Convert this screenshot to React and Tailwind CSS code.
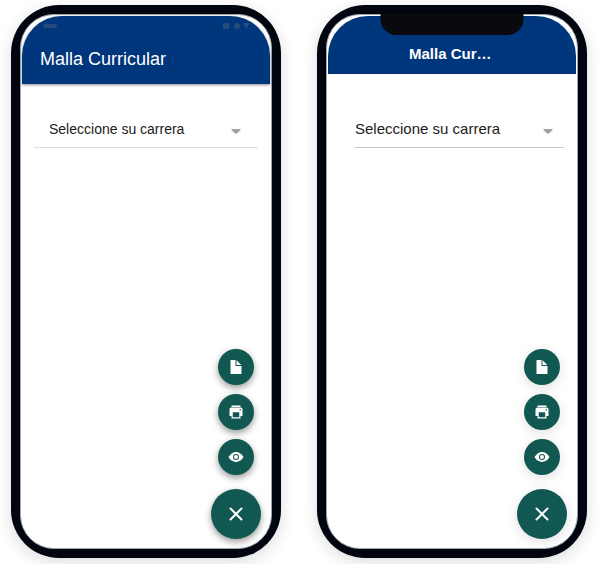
import { IoDocumentSharp, IoPrintSharp, IoEyeSharp } from "react-icons/io5";

function Phone({ children }) {
  return (
    <section className="relative flex min-w-0 flex-1 rounded-[48px] bg-[#01050f] p-[9px] shadow-[0_4px_16px_rgba(0,0,0,0.14)]">
      <div className="flex min-w-0 flex-1 flex-col rounded-[34px] border border-[#a2a5ab] bg-white">
        {children}
      </div>
    </section>
  );
}

function CareerSelect({ id, className, arrowClass }) {
  return (
    <div className={`relative flex items-center border-b ${className}`}>
      <select
        id={id}
        aria-label="Carrera"
        className="h-9 w-full appearance-none bg-transparent text-[#1b1b1b] outline-none"
      >
        <option>Seleccione su carrera</option>
      </select>
      <svg
        viewBox="0 0 10 5"
        className={`pointer-events-none absolute mt-1 h-[5px] w-[10px] fill-[#a2a2a2] ${arrowClass}`}
      >
        <path d="M0.500 0h9v1L6 4.500H4L0.500 1z" />
      </svg>
    </div>
  );
}

function CloseIcon({ className }) {
  return (
    <svg viewBox="0 0 14 14" className={`fill-none stroke-white stroke-2 ${className}`} strokeLinecap="round">
      <path d="M1.500 1.500l11 11M12.500 1.500l-11 11" />
    </svg>
  );
}

function Actions({ shadow, closeClass }) {
  const small = `flex size-9 items-center justify-center rounded-full bg-[#125852] text-white ${shadow}`;
  return (
    <div className="mt-auto mr-[10px] mb-[9px] flex w-[50px] flex-col items-center self-end">
      <div className="mb-[14px] flex flex-col gap-[9px]">
        <button aria-label="Documento" className={small}>
          <IoDocumentSharp className="size-4" />
        </button>
        <button aria-label="Imprimir" className={small}>
          <IoPrintSharp className="size-4" />
        </button>
        <button aria-label="Ver" className={small}>
          <IoEyeSharp className="size-4" />
        </button>
      </div>
      <button
        aria-label="Cerrar"
        className={`flex size-[50px] items-center justify-center rounded-full bg-[#125852] ${shadow}`}
      >
        <CloseIcon className={closeClass} />
      </button>
    </div>
  );
}

export default function App() {
  return (
    <main className="flex h-screen min-h-[480px] gap-9 overflow-hidden bg-white pt-[5px] pr-[14px] pb-[6px] pl-[11px] font-['Liberation_Sans',Arial,sans-serif]">
      <Phone>
        <header className="mx-px mt-px flex h-[68px] flex-col rounded-t-[40px] bg-[#00367b] shadow-[0_1px_3px_rgba(0,0,0,0.45)]">
          <div className="flex h-5 items-center justify-between pr-5 pl-[21px]">
            <span className="h-1 w-[14px] rounded-sm bg-[#254b7d]" />
            <svg viewBox="0 0 27 6" className="h-[6px] w-[27px] fill-[#254b7d]">
              <rect width="6" height="6" rx="1" />
              <circle cx="14" cy="3" r="3" />
              <path d="M20 0h7L23.500 6z" />
            </svg>
          </div>
          <h1 className="pt-[9px] pl-[18px] text-lg leading-7 font-medium text-white">Malla Curricular</h1>
        </header>
        <CareerSelect
          id="carrera-android"
          className="mx-[13px] mt-[27px] border-[#dedede] pl-[15px] text-sm"
          arrowClass="right-[17px]"
        />
        <Actions shadow="shadow-[0_3px_7px_rgba(0,0,0,0.4)]" closeClass="size-[14px]" />
      </Phone>
      <Phone>
        <div className="absolute top-[9px] left-1/2 h-[21px] w-[143px] -translate-x-1/2 rounded-b-2xl bg-[#090a0d]" />
        <header className="mx-px mt-px flex h-[58px] items-end justify-center rounded-t-[40px] border-b border-[#002d67] bg-[#00367b] pb-[7px]">
          <h1 className="w-[86px] truncate text-[15px] leading-6 font-bold text-white">Malla Curricular</h1>
        </header>
        <CareerSelect
          id="carrera-ios"
          className="mt-[37px] mr-[13px] ml-7 border-[#c8c8c8] text-[15px]"
          arrowClass="right-[11px]"
        />
        <Actions shadow="shadow-[0_3px_12px_rgba(0,0,0,0.12)]" closeClass="size-[14px]" />
      </Phone>
    </main>
  );
}
